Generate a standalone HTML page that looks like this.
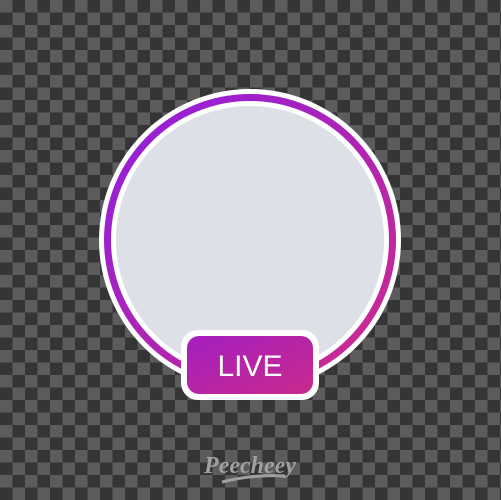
<!DOCTYPE html>
<html><head><style>
html,body{margin:0;padding:0}
body{width:501px;height:500px;overflow:hidden;
background-color:#353535;
background-image:conic-gradient(#353535 25%,#5c5c5c 0 50%,#353535 0 75%,#5c5c5c 0);
background-size:25px 25px;position:relative;font-family:"Liberation Sans",sans-serif}
</style></head><body>
<svg width="501" height="500" style="position:absolute;left:0;top:0">
<defs>
<linearGradient id="g" x1="0" y1="0" x2="1" y2="1">
<stop offset="0" stop-color="#8e1ee0"/><stop offset="1" stop-color="#d02a8a"/>
</linearGradient>
<linearGradient id="b" x1="0" y1="0" x2="1" y2="1">
<stop offset="0" stop-color="#a41fc0"/><stop offset="1" stop-color="#c92a8c"/>
</linearGradient>
</defs>
<circle cx="250" cy="240" r="151" fill="#fff"/>
<circle cx="250" cy="240" r="146" fill="url(#g)"/>
<circle cx="250" cy="240" r="139" fill="#fff"/>
<circle cx="250" cy="240" r="134" fill="#dde0e6"/>
<rect x="181" y="330" width="138" height="70" rx="17" fill="#fff"/>
<rect x="187" y="336" width="126" height="58" rx="12" fill="url(#b)"/>
<text x="250" y="376" text-anchor="middle" font-family="Liberation Sans" font-size="30" fill="#fff">LIVE</text>
<text x="250" y="473" text-anchor="middle" font-family="Liberation Serif" font-style="italic" font-weight="bold" font-size="24" fill="#a0a0a0">Peecheey</text>
<path d="M222 482 Q255 474 285 476" stroke="#a0a0a0" stroke-width="3" fill="none"/>
</svg>
</body></html>
